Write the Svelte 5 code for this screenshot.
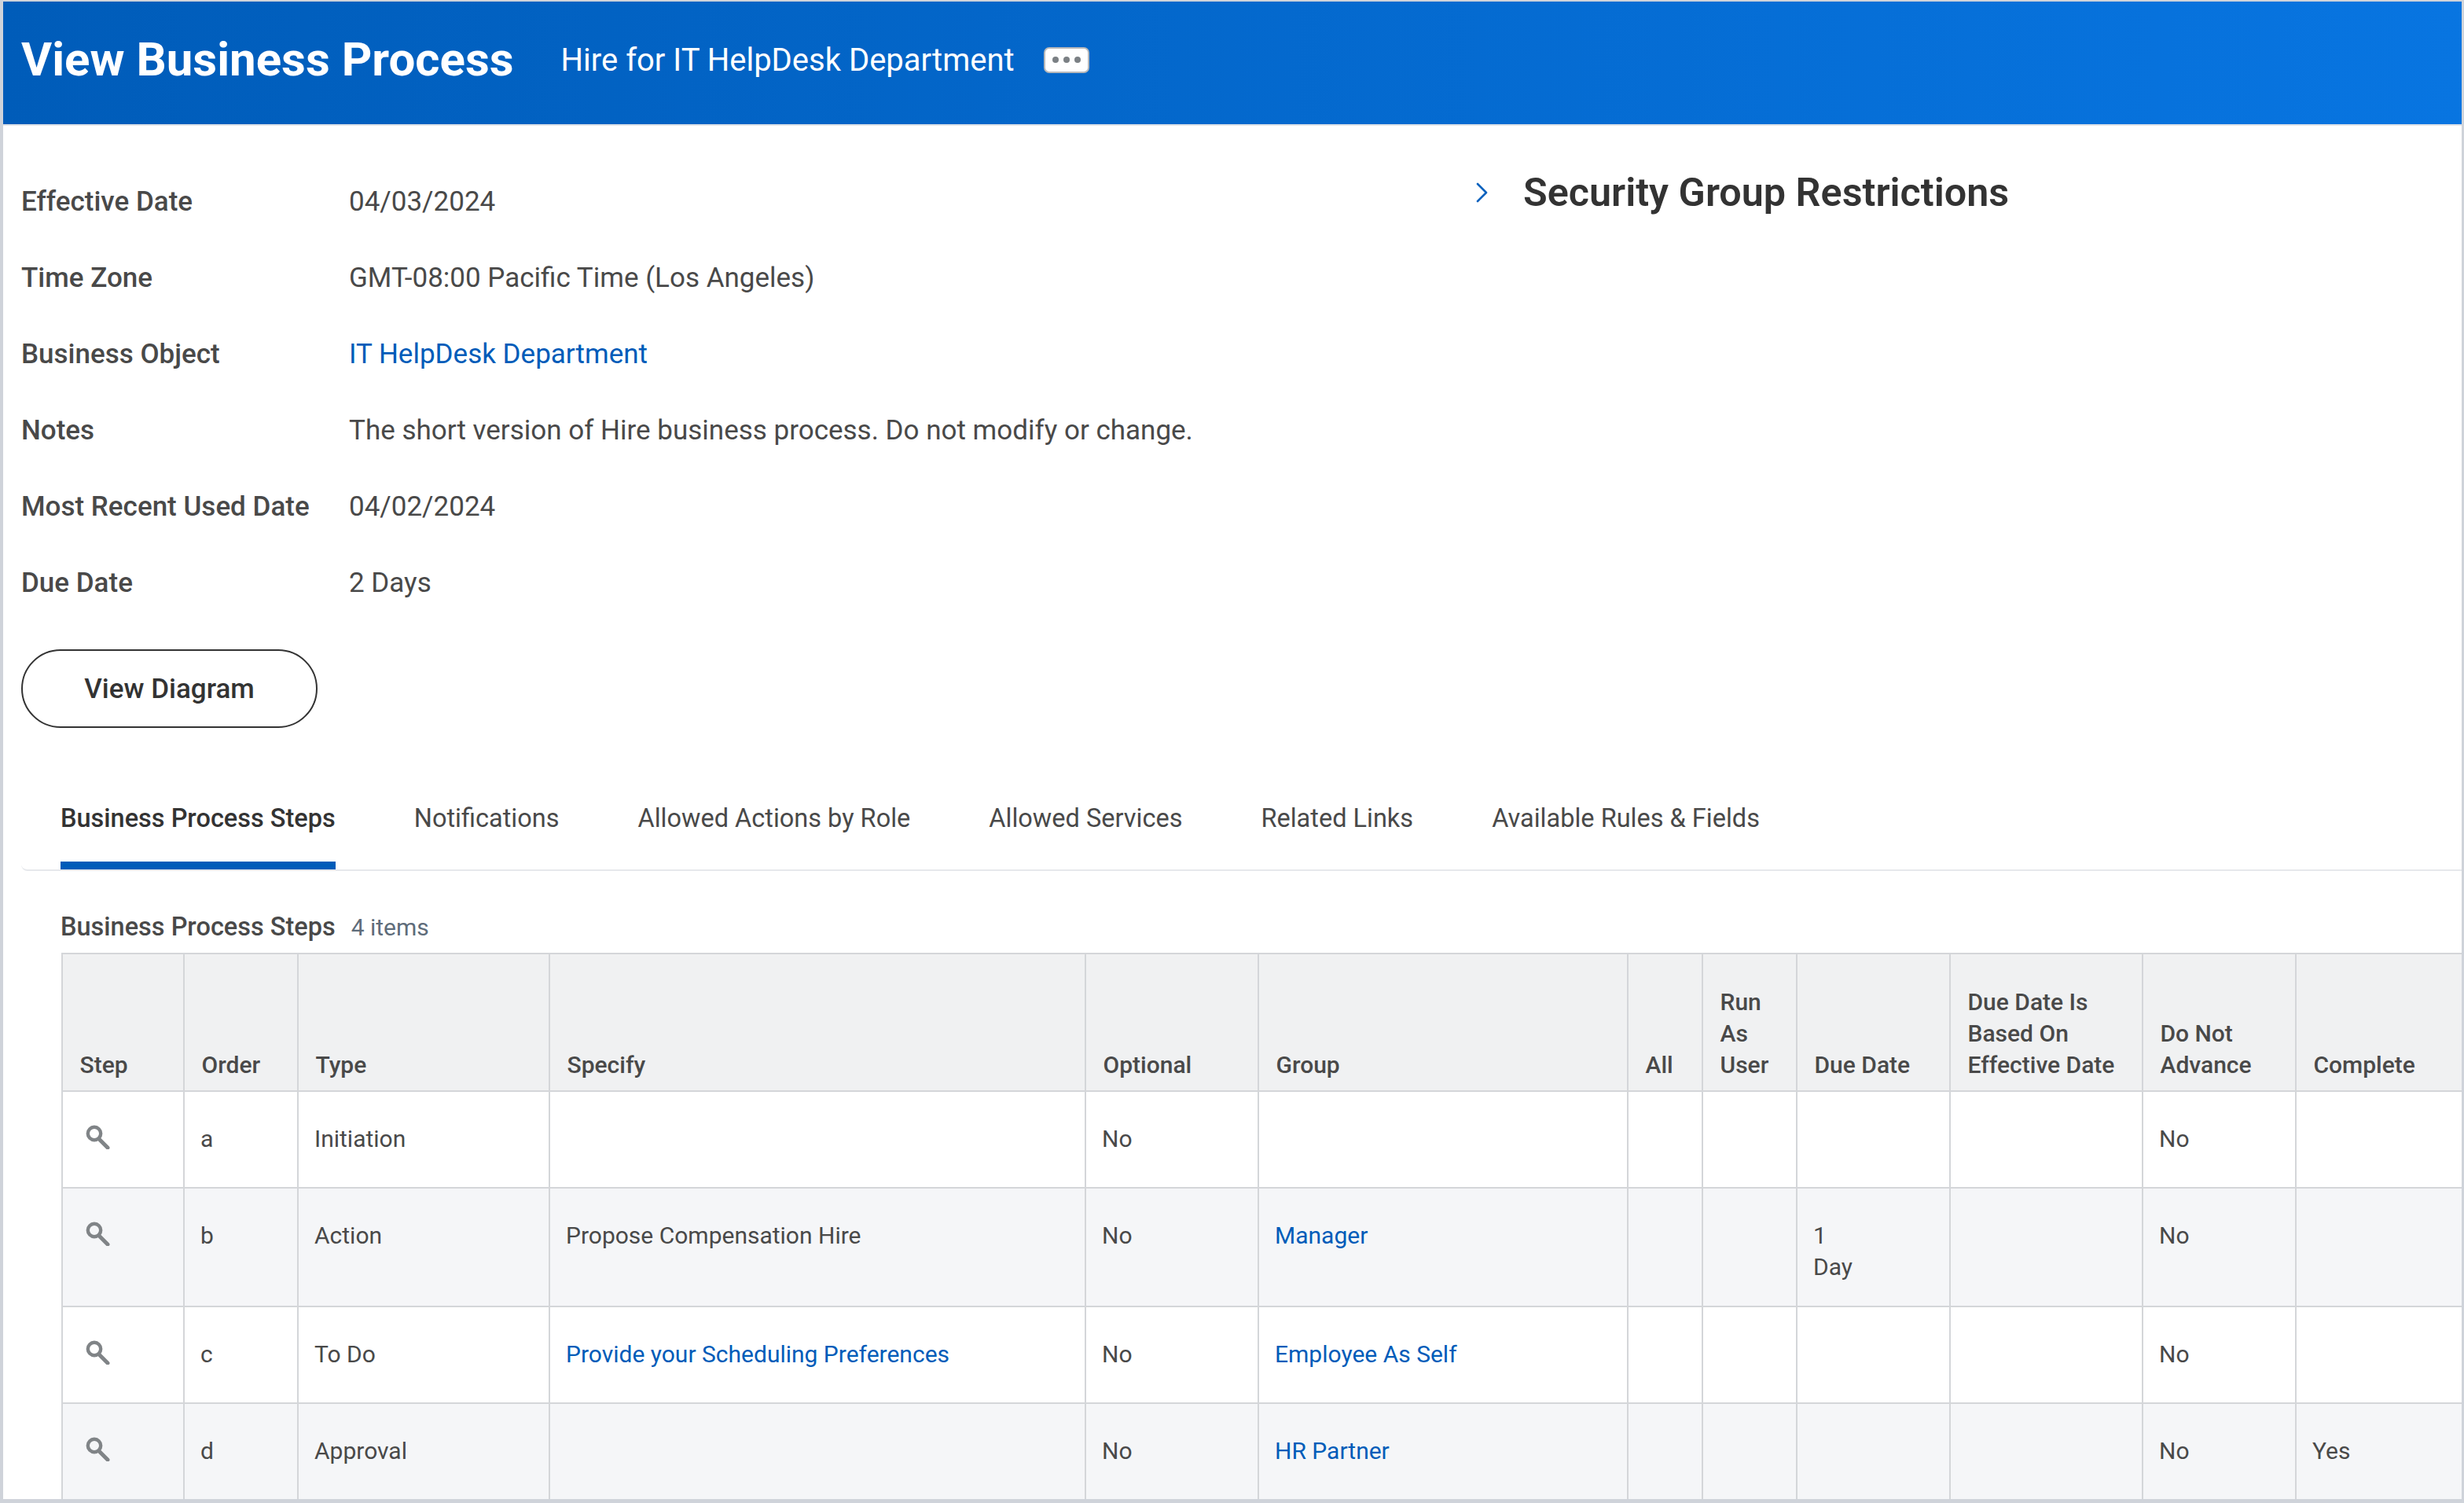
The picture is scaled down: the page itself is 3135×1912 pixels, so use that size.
<script>
  const facts = [
    { label: 'Effective Date', value: '04/03/2024' },
    { label: 'Time Zone', value: 'GMT-08:00 Pacific Time (Los Angeles)' },
    { label: 'Business Object', value: 'IT HelpDesk Department', link: true },
    { label: 'Notes', value: 'The short version of Hire business process. Do not modify or change.' },
    { label: 'Most Recent Used Date', value: '04/02/2024' },
    { label: 'Due Date', value: '2 Days' }
  ];

  const tabs = [
    'Business Process Steps',
    'Notifications',
    'Allowed Actions by Role',
    'Allowed Services',
    'Related Links',
    'Available Rules & Fields'
  ];

  const columns = [
    { title: 'Step', width: 155 },
    { title: 'Order', width: 145 },
    { title: 'Type', width: 320 },
    { title: 'Specify', width: 682 },
    { title: 'Optional', width: 220 },
    { title: 'Group', width: 470 },
    { title: 'All', width: 95 },
    { title: 'Run As User', width: 120 },
    { title: 'Due Date', width: 195 },
    { title: 'Due Date Is Based On Effective Date', width: 245 },
    { title: 'Do Not Advance', width: 195 },
    { title: 'Complete', width: 215 }
  ];

  const steps = [
    { order: 'a', type: 'Initiation', optional: 'No', advance: 'No' },
    { order: 'b', type: 'Action', specify: 'Propose Compensation Hire', optional: 'No', group: 'Manager', due: ['1', 'Day'], advance: 'No' },
    { order: 'c', type: 'To Do', specify: 'Provide your Scheduling Preferences', specifyLink: true, optional: 'No', group: 'Employee As Self', advance: 'No' },
    { order: 'd', type: 'Approval', optional: 'No', group: 'HR Partner', advance: 'No', complete: 'Yes' }
  ];
</script>

<div class="frame">
  <header class="banner">
    <h1>View Business Process</h1>
    <span class="subject">Hire for IT HelpDesk Department</span>
    <button class="more" aria-label="Related actions"><i></i><i></i><i></i></button>
  </header>

  <section class="summary">
    <div class="facts">
      {#each facts as fact}
        <div class="fact">
          <span class="label">{fact.label}</span>
          <span class="value" class:link={fact.link}>{fact.value}</span>
        </div>
      {/each}
    </div>
    <div class="restrictions">
      <svg class="chevron" width="16" height="26" viewBox="0 0 16 26" fill="none" stroke="#0b62be" stroke-width="2.6" stroke-linecap="round" stroke-linejoin="round">
        <path d="M2 2l11 11L2 24" />
      </svg>
      <h2>Security Group Restrictions</h2>
    </div>
  </section>

  <button class="diagram">View Diagram</button>

  <nav class="tabs">
    {#each tabs as tab, i}
      <span class="tab" class:active={i === 0}>{tab}</span>
    {/each}
  </nav>

  <div class="grid-title">
    <span class="name">Business Process Steps</span>
    <span class="count">4 items</span>
  </div>

  <table>
    <colgroup>
      {#each columns as col}
        <col style="width: {col.width}px" />
      {/each}
    </colgroup>
    <thead>
      <tr>
        {#each columns as col}
          <th>{col.title}</th>
        {/each}
      </tr>
    </thead>
    <tbody>
      {#each steps as step, i}
        <tr class:alt={i % 2 === 1} class:tall={step.due}>
          <td>
            <svg class="search" width="32" height="32" viewBox="0 0 32 32" fill="none" stroke="#808487" stroke-linecap="round">
              <circle cx="11" cy="12" r="8.2" stroke-width="4.4" />
              <path d="M17.5 19.5L28 30" stroke-width="5" />
            </svg>
          </td>
          <td>{step.order}</td>
          <td>{step.type}</td>
          <td class:link={step.specifyLink}>{step.specify ?? ''}</td>
          <td>{step.optional}</td>
          <td class="link">{step.group ?? ''}</td>
          <td></td>
          <td></td>
          <td>
            {#if step.due}
              {#each step.due as line}<div>{line}</div>{/each}
            {/if}
          </td>
          <td></td>
          <td>{step.advance}</td>
          <td>{step.complete ?? ''}</td>
        </tr>
      {/each}
    </tbody>
  </table>
</div>

<style>
  :global(body) { margin: 0; background: #fff; }

  .frame {
    box-sizing: border-box;
    width: 3135px;
    height: 1912px;
    overflow: hidden;
    border: solid #cfd3da;
    border-width: 2px 3px 5px 4px;
    font-family: Roboto, "Noto Sans", sans-serif;
    color: #494949;
    background: #fff;
  }

  .banner {
    display: flex;
    align-items: center;
    height: 148px;
    padding: 0 0 8px 23px;
    background: linear-gradient(to right, #005cb9, #0875e1);
    border-bottom: 2px solid #dfe3e8;
    box-sizing: content-box;
    margin-left: -1px;
    color: #fff;
  }
  h1 { margin: 0 60px 0 1px; font-size: 60px; font-weight: 700; line-height: 1; }
  .subject { font-size: 40px; }
  .more {
    display: flex;
    align-items: center;
    justify-content: center;
    gap: 6px;
    width: 58px;
    height: 33px;
    margin-left: 37px;
    padding: 0;
    background: #fff;
    border: 2px solid #b8b9bb;
    border-radius: 7px;
  }
  .more i { width: 8px; height: 8px; border-radius: 50%; background: #7b8084; }

  .summary { display: flex; padding: 73px 0 0 23px; }
  .facts { width: 1851px; }
  .fact { display: flex; height: 97px; font-size: 35px; line-height: 48px; }
  .label { width: 417px; font-weight: 500; }
  .link { color: #005cb9; }

  .restrictions { display: flex; align-items: center; gap: 44px; height: 48px; margin-top: -12px; }
  h2 { margin: 0; font-size: 50.3px; font-weight: 600; color: #333; line-height: 1; }

  .diagram {
    display: block;
    box-sizing: border-box;
    width: 377px;
    height: 100px;
    margin: 11px 0 0 23px;
    background: #fff;
    border: 2px solid #333;
    border-radius: 50px;
    font: 500 35px Roboto, sans-serif;
    color: #333;
  }

  .tabs {
    display: flex;
    gap: 100px;
    margin: 67px 0 0 23px;
    padding-left: 50px;
    height: 115px;
    box-sizing: border-box;
    border-bottom: 2px solid #e6e8ec;
    border-bottom-left-radius: 8px;
    font-size: 32.5px;
    line-height: 48px;
  }
  .tab { height: 113px; box-sizing: border-box; padding-top: 24px; }
  .tab.active { font-weight: 500; border-bottom: 10px solid #005cb9; color: #333; }

  .grid-title { display: flex; align-items: baseline; gap: 20px; margin: 47px 0 0 73px; height: 57px; font-size: 32.5px; line-height: 48px; }
  .name { font-weight: 500; }
  .count { font-size: 30px; color: #5e6c7a; }

  table {
    table-layout: fixed;
    border-collapse: collapse;
    width: 3042px;
    margin-left: 74px;
    font-size: 30px;
    line-height: 40px;
  }
  th, td { border: 2px solid #d4d6d9; vertical-align: top; padding: 40px 20px 0; text-align: left; }
  th {
    vertical-align: bottom;
    height: 175px;
    box-sizing: border-box;
    padding: 12px 21px 12px 21.5px;
    background: #f0f1f2;
    font-weight: 500;
  }
  td { height: 81px; }
  tr.tall td { height: 109px; }
  tr.alt td { background: #f5f6f8; }
  td.link { color: #005cb9; }
  .search { display: block; margin: 1px 0 0 9px; }
</style>
